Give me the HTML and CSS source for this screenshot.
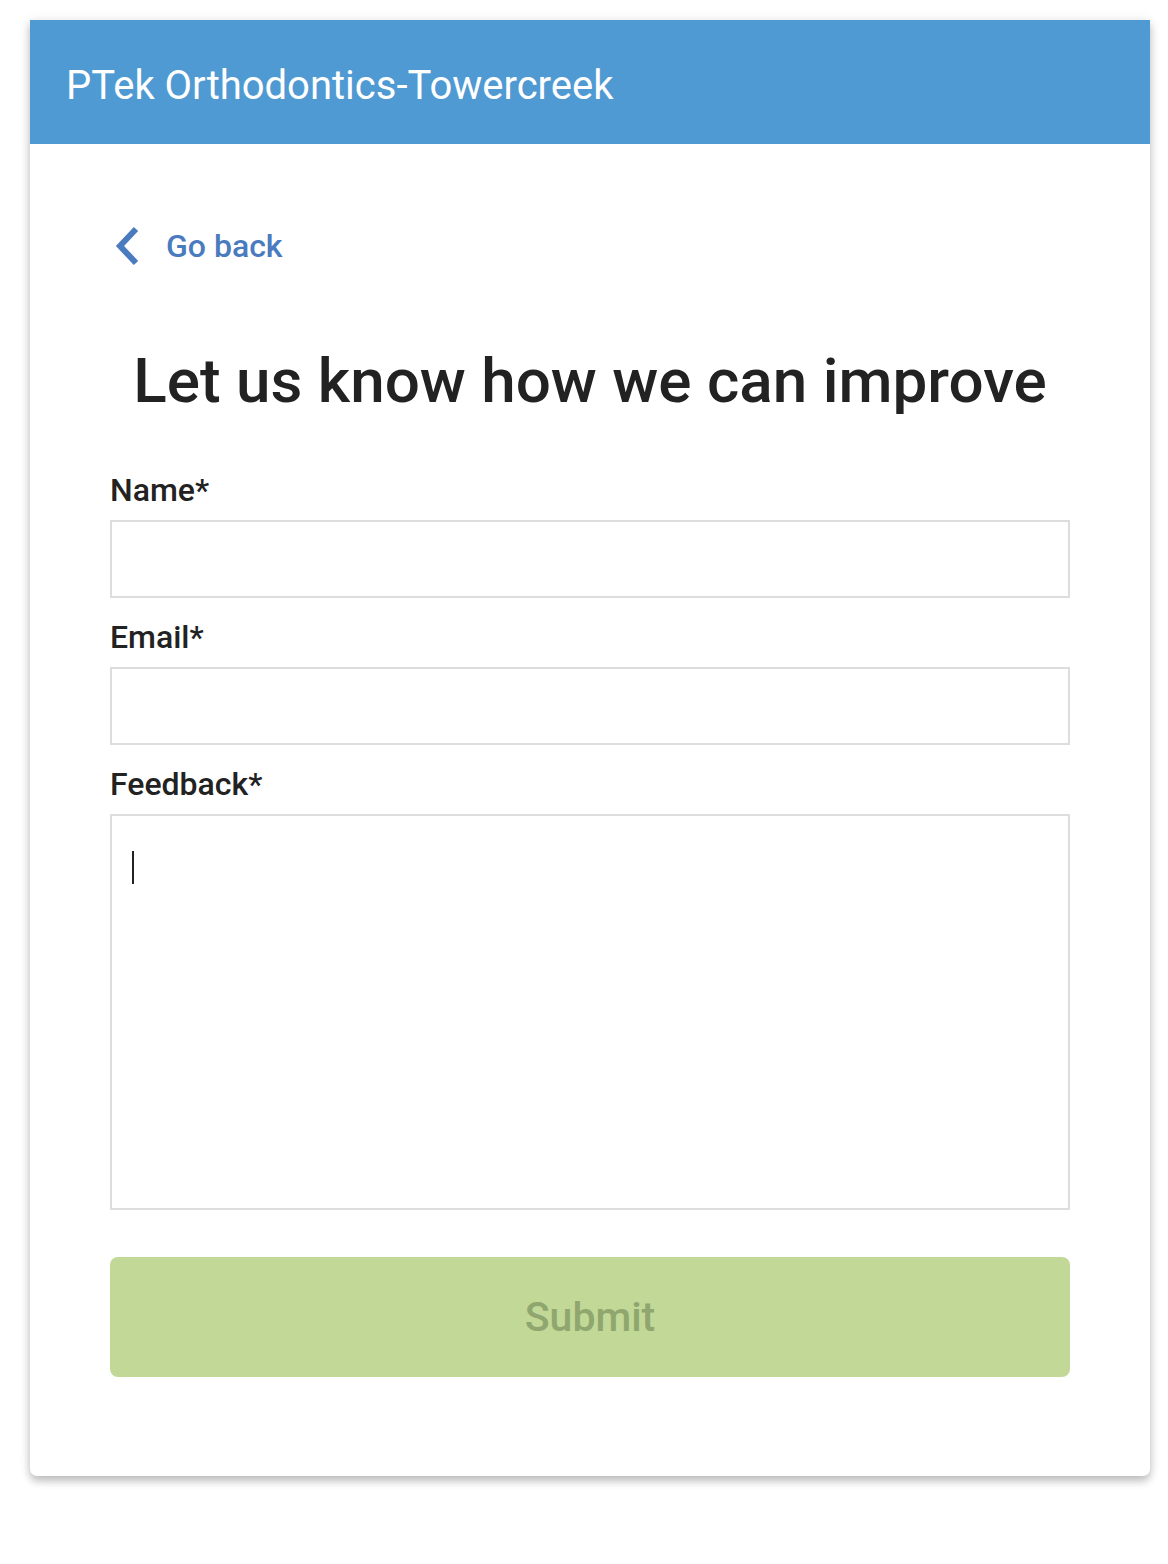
FILE: index.html
```html
<!DOCTYPE html>
<html>
<head>
<meta charset="utf-8">
<link rel="stylesheet" href="styles.css">
</head>
<body>
<div class="card">
  <header class="bar">PTek Orthodontics-Towercreek</header>
  <main class="content">
    <a class="back" href="#">
      <svg class="chev" width="26" height="40" viewBox="0 0 26 40"><path d="M22 3 L6 20 L22 37" fill="none" stroke="#4A7BBF" stroke-width="6"/></svg>
      <span>Go back</span>
    </a>
    <h1 class="title">Let us know how we can improve</h1>
    <form class="form">
      <label class="label">Name*</label>
      <div class="input"></div>
      <label class="label">Email*</label>
      <div class="input"></div>
      <label class="label">Feedback*</label>
      <div class="textarea"><span class="caret"></span></div>
      <div class="submit">Submit</div>
    </form>
  </main>
</div>
</body>
</html>
```
FILE: styles.css
```css
html, body { margin: 0; padding: 0; background: #fff; }
body { font-family: Roboto, "Noto Sans", sans-serif; padding: 20px 18px 60px 30px; }
.card {
  width: 1120px;
  background: #fff;
  border-radius: 0 0 7px 7px;
  box-shadow: 0 0 14px rgba(0,0,0,0.07), 0 5px 9px rgba(0,0,0,0.24);
  overflow: hidden;
}
.bar {
  height: 124px;
  background: #4F9AD2;
  color: #fff;
  font-size: 40px;
  display: flex;
  align-items: center;
  padding-left: 36px;
  padding-top: 7px;
  box-sizing: border-box;
}
.content { padding: 79px 80px 99px 80px; }
.back {
  display: flex;
  align-items: center;
  gap: 26px;
  text-decoration: none;
  color: #4A7BBF;
  font-size: 32px;
  font-weight: 500;
  height: 46px;
  margin-left: 4px;
}
.chev { display: block; }
.title {
  margin: 75px 0 0 0;
  text-align: center;
  font-size: 62px;
  font-weight: 500;
  color: #222;
  line-height: 74px;
}
.form { display: flex; flex-direction: column; margin-top: 53px; }
.label { font-size: 32px; font-weight: 500; color: #222; line-height: 38px; margin-bottom: 11px; }
.input {
  height: 78px;
  border: 2px solid #ddd;
  box-sizing: border-box;
  margin-bottom: 20px;
}
.textarea {
  height: 396px;
  border: 2px solid #ddd;
  box-sizing: border-box;
  padding: 35px 0 0 20px;
}
.caret { display: block; width: 2px; height: 33px; background: #222; }
.submit {
  margin-top: 47px;
  height: 120px;
  border-radius: 8px;
  background: #C2D897;
  color: #8FA66F;
  font-size: 41px;
  font-weight: 500;
  display: flex;
  align-items: center;
  justify-content: center;
}
```
